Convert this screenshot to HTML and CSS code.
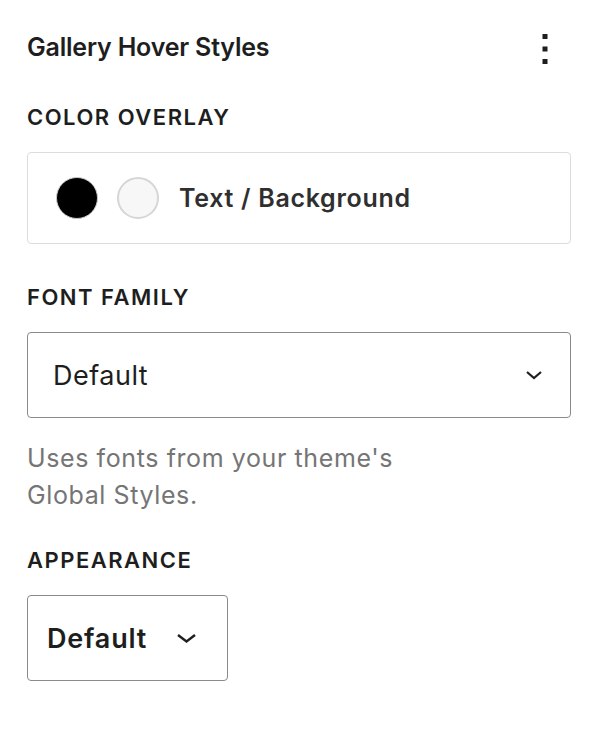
FILE: index.html
```html
<!DOCTYPE html>
<html lang="en">
<head>
    <meta charset="UTF-8">
    <meta name="viewport" content="width=device-width, initial-scale=1.0">
    <title>Gallery Hover Styles</title>
    <link rel="stylesheet" href="styles.css">
</head>
<body>
    <div class="panel">
        <div class="panel-header">
            <h2>Gallery Hover Styles</h2>
            <button class="menu-button" type="button" aria-label="Options">
                <svg width="6" height="30" viewBox="0 0 6 30">
                    <rect x="0.5" y="0" width="5" height="5" fill="#1e1e1e"/>
                    <rect x="0.5" y="12.5" width="5" height="5" fill="#1e1e1e"/>
                    <rect x="0.5" y="25" width="5" height="5" fill="#1e1e1e"/>
                </svg>
            </button>
        </div>

        <div class="section section-first">
            <h3 class="section-label">Color Overlay</h3>
            <div class="color-box">
                <span class="swatch swatch-dark"></span>
                <span class="swatch swatch-light"></span>
                <span class="color-label">Text / Background</span>
            </div>
        </div>

        <div class="section">
            <h3 class="section-label">Font Family</h3>
            <div class="select-box">
                <span>Default</span>
                <svg class="chevron" width="18" height="10" viewBox="0 0 18 10">
                    <path d="M2 2 L9 8 L16 2" fill="none" stroke="#1e1e1e" stroke-width="2.2"/>
                </svg>
            </div>
            <p class="help">Uses fonts from your theme's<br>Global Styles.</p>
        </div>

        <div class="section section-last">
            <h3 class="section-label">Appearance</h3>
            <div class="appearance-box">
                <span>Default</span>
                <svg class="chevron" width="21" height="10" viewBox="0 0 21 10">
                    <path d="M2 2 L10.5 8.5 L19 2" fill="none" stroke="#1e1e1e" stroke-width="2.4"/>
                </svg>
            </div>
        </div>
    </div>
</body>
</html>
```

FILE: styles.css
```css
body {
    margin: 0;
    padding: 0;
    background: #fff;
    font-family: Inter, "Noto Sans", sans-serif;
    color: #1e1e1e;
}
.panel {
    padding: 32px 29px 0 27px;
}
.panel-header {
    display: flex;
    justify-content: space-between;
    align-items: flex-start;
}
.panel-header h2 {
    margin: 0;
    font-size: 25px;
    line-height: 30px;
    font-weight: 600;
    letter-spacing: -0.2px;
}
.menu-button {
    background: none;
    border: none;
    padding: 0;
    margin: 2px 23px 0 0;
    display: flex;
}
.section {
    margin-top: 41px;
}
.section-first {
    margin-top: 41px;
}
.section-last {
    margin-top: 34px;
}
.section-label {
    margin: 0 0 23px;
    font-size: 22px;
    line-height: 24px;
    font-weight: 600;
    letter-spacing: 1.5px;
    text-transform: uppercase;
}
.color-box {
    display: flex;
    align-items: center;
    height: 90px;
    padding: 0 28px;
    border: 1px solid #dcdcdc;
    border-radius: 4px;
}
.swatch {
    width: 42px;
    height: 42px;
    border-radius: 50%;
    box-sizing: border-box;
    margin-right: 19px;
}
.swatch-dark {
    background: #000;
    border: 1px solid #c8c8c8;
}
.swatch-light {
    background: #f7f7f7;
    border: 2px solid #d6d6d6;
    margin-right: 20px;
}
.color-label {
    font-size: 25px;
    font-weight: 600;
    letter-spacing: 0.7px;
    color: #2f2f2f;
}
.select-box {
    display: flex;
    justify-content: space-between;
    align-items: center;
    height: 84px;
    padding: 0 27px 0 25px;
    border: 1px solid #8a8a8a;
    border-radius: 4px;
    font-size: 27px;
    letter-spacing: 0.5px;
}
.help {
    margin: 22px 0 0;
    font-size: 25px;
    line-height: 37px;
    letter-spacing: 0.6px;
    color: #757575;
}
.appearance-box {
    display: inline-flex;
    align-items: center;
    gap: 29px;
    height: 84px;
    padding: 0 30px 0 19px;
    border: 1px solid #8a8a8a;
    border-radius: 4px;
    font-size: 27px;
    font-weight: 600;
    letter-spacing: 0.8px;
}
```
